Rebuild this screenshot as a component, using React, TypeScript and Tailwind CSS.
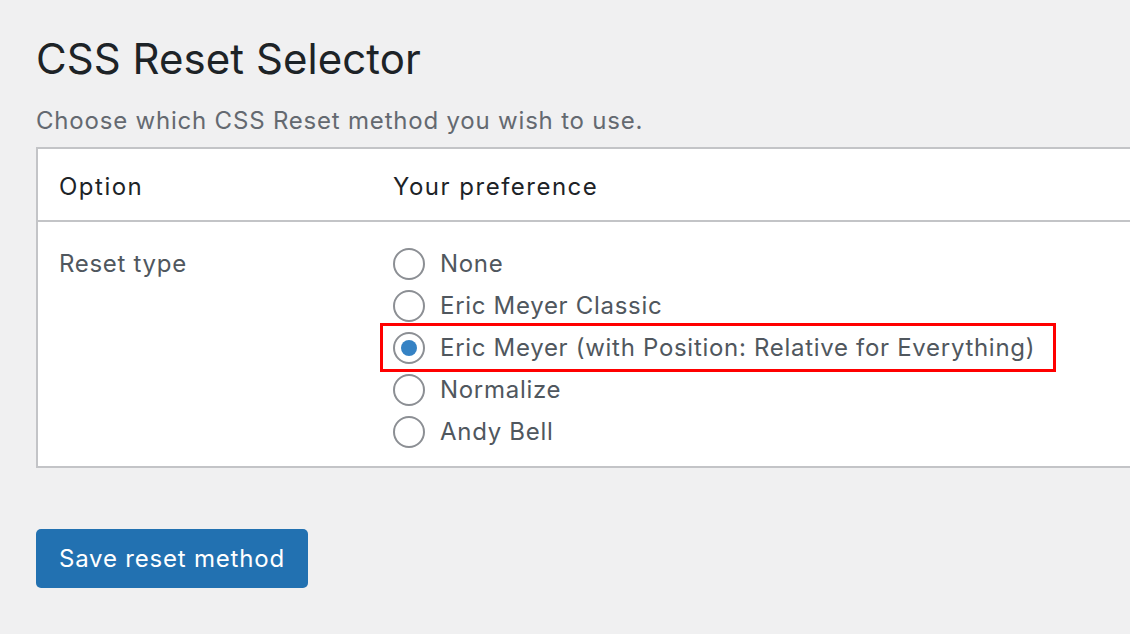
import { useState } from "react";

const options = [
  "None",
  "Eric Meyer Classic",
  "Eric Meyer (with Position: Relative for Everything)",
  "Normalize",
  "Andy Bell",
];

function Radio({ checked }: { checked: boolean }) {
  return (
    <span className="flex h-[32px] w-[32px] shrink-0 items-center justify-center rounded-full border-2 border-[#8c8f94] bg-white">
      {checked && <span className="h-[16px] w-[16px] rounded-full bg-[#3582c4]" />}
    </span>
  );
}

export default function App() {
  const [selected, setSelected] = useState(2);

  return (
    <div
      className="h-[634px] w-[1130px] overflow-hidden bg-[#f0f0f1] pl-[36px]"
      style={{ fontFamily: "Inter, 'Noto Sans', sans-serif" }}>
      <h1 className="pt-[31px] text-[42px] leading-[56px] font-normal tracking-[0.05px] text-[#1d2327]">
        CSS Reset Selector
      </h1>
      <p className="mt-[18px] text-[24px] leading-[32px] tracking-[0.8px] text-[#646970]">
        Choose which CSS Reset method you wish to use.
      </p>

      <div className="mt-[10px] w-[1110px] border-2 border-[#c3c4c7] bg-white">
        <div className="flex h-[73px] items-center border-b-2 border-[#c3c4c7] pt-[4px] text-[24px] tracking-[1.5px] text-[#1d2327]">
          <div className="w-[355px] pl-[21px]">Option</div>
          <div>Your preference</div>
        </div>
        <div className="flex pt-[26px] pb-[18px] text-[24px] tracking-[0.7px] text-[#50575e]">
          <div className="w-[355px] pl-[21px] leading-[32px]">Reset type</div>
          <div className="flex flex-col gap-[10px]">
            {options.map((label, i) => (
              <div key={label} className="relative flex items-center">
                {i === 2 && (
                  <span className="pointer-events-none absolute -top-[9px] -bottom-[8px] -left-[13px] w-[676px] border-[3px] border-[#ff0000]" />
                )}
                <button
                  type="button"
                  onClick={() => setSelected(i)}
                  className="flex items-center gap-[15px] leading-[32px]">
                  <Radio checked={selected === i} />
                  <span>{label}</span>
                </button>
              </div>
            ))}
          </div>
        </div>
      </div>

      <button
        type="button"
        className="mt-[61px] h-[59px] rounded-[5px] bg-[#2271b1] px-[23px] text-[24px] tracking-[0.8px] text-white">
        Save reset method
      </button>
    </div>
  );
}
